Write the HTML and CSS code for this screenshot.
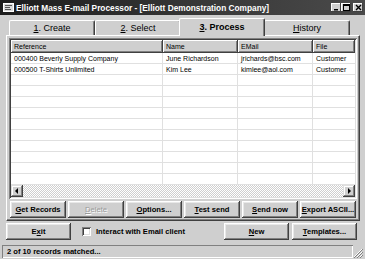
FILE: index.html
```html
<!DOCTYPE html>
<html>
<head>
<meta charset="utf-8">
<link rel="stylesheet" href="styles.css">
</head>
<body>
<div class="window">
  <div class="titlebar">
    <svg class="appicon" width="11" height="9" viewBox="0 0 11 9">
      <rect x="0.5" y="0.5" width="10" height="8" fill="#d8d8d8" stroke="#fff"/>
      <rect x="2" y="2" width="7" height="1" fill="#555"/>
      <rect x="2" y="4" width="5" height="1" fill="#555"/>
      <rect x="2" y="6" width="6" height="1" fill="#555"/>
    </svg>
    <span class="title">Elliott Mass E-mail Processor - [Elliott Demonstration Company]</span>
    <div class="controls">
      <span class="ctl"><svg width="7" height="7" viewBox="0 0 7 7"><rect x="1" y="5" width="4" height="1.5" fill="#000"/></svg></span>
      <span class="ctl"><svg width="7" height="7" viewBox="0 0 7 7"><rect x="0.5" y="0.5" width="6" height="6" fill="none" stroke="#000"/><rect x="0.5" y="0.5" width="6" height="1.5" fill="#000"/></svg></span>
      <span class="ctl close"><svg width="7" height="7" viewBox="0 0 7 7"><path d="M1 1 L6 6 M6 1 L1 6" stroke="#000" stroke-width="1.4"/></svg></span>
    </div>
  </div>

  <div class="tabs">
    <div class="tab"><span><u>1</u>. Create</span></div>
    <div class="tab"><span><u>2</u>. Select</span></div>
    <div class="tab active"><span><u>3</u>. Process</span></div>
    <div class="tab"><span><u>H</u>istory</span></div>
  </div>

  <div class="panel">
    <div class="listview">
      <div class="header">
        <div class="hcell c1">Reference</div>
        <div class="hcell c2">Name</div>
        <div class="hcell c3">EMail</div>
        <div class="hcell c4">File</div>
      </div>
      <div class="rows">
        <div class="row"><div class="cell c1">000400 Beverly Supply Company</div><div class="cell c2">June Richardson</div><div class="cell c3">jrichards@bsc.com</div><div class="cell c4">Customer</div></div>
        <div class="row"><div class="cell c1">000500 T-Shirts Unlimited</div><div class="cell c2">Kim Lee</div><div class="cell c3">kimlee@aol.com</div><div class="cell c4">Customer</div></div>
        <div class="row"><div class="cell c1"></div><div class="cell c2"></div><div class="cell c3"></div><div class="cell c4"></div></div>
        <div class="row"><div class="cell c1"></div><div class="cell c2"></div><div class="cell c3"></div><div class="cell c4"></div></div>
        <div class="row"><div class="cell c1"></div><div class="cell c2"></div><div class="cell c3"></div><div class="cell c4"></div></div>
        <div class="row"><div class="cell c1"></div><div class="cell c2"></div><div class="cell c3"></div><div class="cell c4"></div></div>
        <div class="row"><div class="cell c1"></div><div class="cell c2"></div><div class="cell c3"></div><div class="cell c4"></div></div>
        <div class="row"><div class="cell c1"></div><div class="cell c2"></div><div class="cell c3"></div><div class="cell c4"></div></div>
        <div class="row"><div class="cell c1"></div><div class="cell c2"></div><div class="cell c3"></div><div class="cell c4"></div></div>
        <div class="row"><div class="cell c1"></div><div class="cell c2"></div><div class="cell c3"></div><div class="cell c4"></div></div>
        <div class="row"><div class="cell c1"></div><div class="cell c2"></div><div class="cell c3"></div><div class="cell c4"></div></div>
        <div class="row"><div class="cell c1"></div><div class="cell c2"></div><div class="cell c3"></div><div class="cell c4"></div></div>
      </div>
      <div class="hscroll">
        <span class="sbtn"><svg width="4" height="6" viewBox="0 0 4 6"><path d="M3 0 L0 3 L3 6 Z" fill="#000"/></svg></span>
        <span class="strack"></span>
        <span class="sbtn"><svg width="4" height="6" viewBox="0 0 4 6"><path d="M1 0 L4 3 L1 6 Z" fill="#000"/></svg></span>
      </div>
    </div>
    <div class="btnrow">
      <button class="btn"><u>G</u>et Records</button>
      <button class="btn disabled"><u>D</u>elete</button>
      <button class="btn"><u>O</u>ptions...</button>
      <button class="btn"><u>T</u>est send</button>
      <button class="btn"><u>S</u>end now</button>
      <button class="btn"><u>E</u>xport ASCII...</button>
    </div>
  </div>

  <div class="bottomrow">
    <button class="btn exit">E<u>x</u>it</button>
    <label class="check"><span class="box"></span><span>Interact with Email client</span></label>
    <button class="btn new"><u>N</u>ew</button>
    <button class="btn templ"><u>T</u>emplates...</button>
  </div>

  <div class="statusbar">
    <div class="status">2 of 10 records matched...</div>
    <svg class="grip" width="10" height="10" viewBox="0 0 10 10">
      <path d="M9 1 L1 9 M9 4 L4 9 M9 7 L7 9" stroke="#fff" stroke-width="1"/>
      <path d="M10 1 L1 10 M10 4 L4 10 M10 7 L7 10" stroke="#808080" stroke-width="1"/>
    </svg>
  </div>
</div>
</body>
</html>
```

FILE: styles.css
```css
* { box-sizing: border-box; }
html, body { margin: 0; padding: 0; }
body {
  width: 365px;
  height: 259px;
  overflow: hidden;
  background: #cfcfcf;
  font-family: "Liberation Sans", Arial, sans-serif;
}
.window {
  width: 365px;
  height: 259px;
  display: flex;
  flex-direction: column;
  background: #cfcfcf;
}
.titlebar {
  height: 15px;
  flex: none;
  display: flex;
  align-items: center;
  padding: 0 2px 0 3px;
  background: linear-gradient(to right, #1c1c1c, #3a3a3a 60%, #4a4a4a);
}
.appicon { flex: none; margin-right: 2px; }
.title {
  color: #fff;
  font-weight: bold;
  font-size: 8.3px;
  white-space: nowrap;
  flex: 1;
}
.controls { display: flex; gap: 0; }
.ctl {
  width: 10px;
  height: 9px;
  background: #cfcfcf;
  display: flex;
  align-items: center;
  justify-content: center;
  box-shadow: inset -1px -1px #404040, inset 1px 1px #fff;
}
.ctl.close { margin-left: 2px; }

.tabs {
  flex: none;
  display: flex;
  height: 20px;
  padding: 4px 0 0 9px;
  align-items: flex-end;
}
.tab {
  width: 86px;
  height: 15px;
  display: flex;
  align-items: center;
  justify-content: center;
  font-size: 9px;
  color: #000;
  border-top: 1px solid #fff;
  border-left: 1px solid #fff;
  border-right: 1px solid #404040;
  border-radius: 2px 2px 0 0;
  box-shadow: inset -1px 0 #808080;
  position: relative;
}
.tab.active {
  height: 18px;
  width: 86px;
  margin: 0 -1px 0 -2px;
  font-weight: bold;
  z-index: 2;
  background: #cfcfcf;
  margin-bottom: -1px;
  padding-bottom: 1px;
}

.panel {
  flex: none;
  margin: 0 5px 0 6px;
  height: 186px;
  border-top: 1px solid #fff;
  border-left: 1px solid #fff;
  border-right: 1px solid #404040;
  border-bottom: 1px solid #404040;
  box-shadow: inset -1px -1px #808080;
  padding: 2px 2px 0 2px;
  display: flex;
  flex-direction: column;
}
.listview {
  height: 161px;
  flex: none;
  background: #fff;
  display: flex;
  flex-direction: column;
  padding: 2px;
  box-shadow: inset 1px 1px #808080, inset -1px -1px #fff, inset 2px 2px #404040, inset -2px -2px #dfdfdf;
  overflow: hidden;
}
.header { display: flex; height: 13px; flex: none; }
.hcell {
  background: #cfcfcf;
  font-size: 7px;
  padding-left: 3px;
  display: flex;
  align-items: center;
  box-shadow: inset -1px -1px #404040, inset 1px 1px #fff, inset -2px -2px #808080;
  white-space: nowrap;
  overflow: hidden;
}
.c1 { width: 152px; flex: none; }
.c2 { width: 75px; flex: none; }
.c3 { width: 75px; flex: none; }
.c4 { flex: 1; }
.rows { flex: 1; overflow: hidden; }
.row { display: flex; height: 11px; border-bottom: 1px solid #e0e0e0; }
.cell {
  font-size: 7px;
  padding-left: 3px;
  display: flex;
  align-items: center;
  border-right: 1px solid #e0e0e0;
  white-space: nowrap;
  color: #000;
}
.row .c4 { border-right: none; }
.hscroll {
  flex: none;
  height: 12px;
  display: flex;
  background: #e6e6e6;
}
.sbtn {
  width: 12px;
  height: 12px;
  flex: none;
  background: #cfcfcf;
  display: flex;
  align-items: center;
  justify-content: center;
  box-shadow: inset -1px -1px #404040, inset 1px 1px #dfdfdf, inset -2px -2px #808080, inset 2px 2px #fff;
}
.strack {
  flex: 1;
  background-image: linear-gradient(45deg, #cfcfcf 25%, transparent 25%, transparent 75%, #cfcfcf 75%), linear-gradient(45deg, #cfcfcf 25%, #fff 25%, #fff 75%, #cfcfcf 75%);
  background-size: 2px 2px;
  background-position: 0 0, 1px 1px;
}

.btnrow {
  display: flex;
  gap: 2px;
  margin-top: 2px;
  padding-left: 1px;
}
.btn {
  width: 56px;
  height: 17px;
  flex: none;
  padding: 0;
  border: none;
  background: #cfcfcf;
  font-family: "Liberation Sans", Arial, sans-serif;
  font-weight: bold;
  font-size: 7.6px;
  color: #000;
  white-space: nowrap;
  box-shadow: inset -1px -1px #404040, inset 1px 1px #fff, inset -2px -2px #808080, inset 2px 2px #e8e8e8;
}
.btn.disabled { color: #9a9a9a; text-shadow: 1px 1px #fff; font-weight: normal; }

.bottomrow {
  flex: none;
  display: flex;
  align-items: center;
  height: 17px;
  margin-top: 2px;
  padding-left: 6px;
}
.btn.exit { width: 65px; }
.check {
  display: flex;
  align-items: center;
  margin-left: 11px;
  font-size: 7.6px;
  font-weight: bold;
  white-space: nowrap;
  flex: 1;
}
.box {
  width: 9px;
  height: 9px;
  background: #fff;
  margin-right: 5px;
  box-shadow: inset 1px 1px #808080, inset -1px -1px #fff, inset 2px 2px #404040, inset -2px -2px #dfdfdf;
}
.btn.new { width: 65px; margin-right: 3px; }
.btn.templ { width: 65px; margin-right: 8px; }

.statusbar {
  flex: none;
  margin-top: 2px;
  height: 17px;
  display: flex;
  align-items: flex-end;
  padding: 2px 2px 1px 2px;
}
.status {
  flex: 1;
  height: 13px;
  font-size: 7.6px;
  font-weight: bold;
  padding-left: 5px;
  display: flex;
  align-items: center;
  box-shadow: inset 1px 1px #808080, inset -1px -1px #fff;
}
.grip { flex: none; }
```
